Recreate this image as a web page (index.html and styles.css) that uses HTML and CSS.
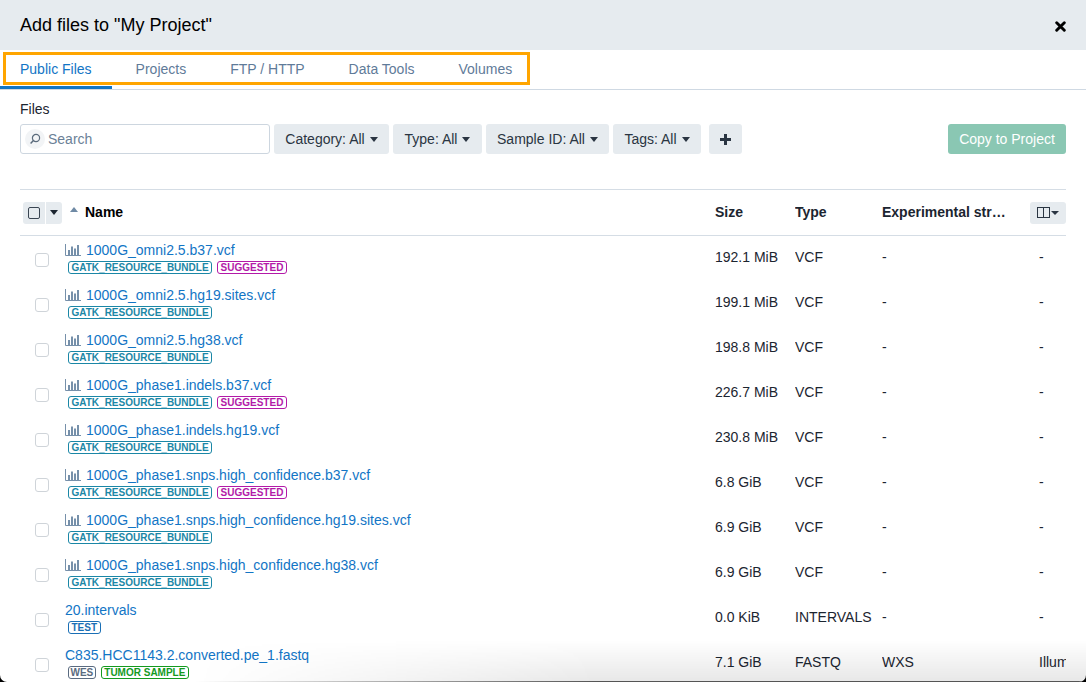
FILE: index.html
```html
<!DOCTYPE html>
<html lang="en">
<head>
<meta charset="utf-8">
<title>Add files</title>
<link rel="stylesheet" href="styles.css">
</head>
<body>
<svg class="sprite" width="0" height="0" aria-hidden="true">
  <symbol id="bars" viewBox="0 0 16 12"><path d="M.5 0v11.5H16" fill="none" stroke="currentColor"/><path d="M3 6h2v5H3zM6 2.5h2V11H6zM9 4.5h2V11H9zM12 1h2v10h-2z" fill="currentColor"/></symbol>
</svg>
<main class="modal">
  <header class="modal-head">
    <h1 class="title">Add files to "My Project"</h1>
    <svg class="close" width="11" height="11" viewBox="0 0 11 11" aria-label="Close"><path d="M1.7 1.7l7.6 7.6M9.3 1.7l-7.6 7.6" stroke="#000" stroke-width="2.9" stroke-linecap="round"/></svg>
  </header>
  <nav class="tabs">
    <div class="tab-highlight"></div>
    <a class="tab tab-active">Public Files</a>
    <a class="tab">Projects</a>
    <a class="tab">FTP / HTTP</a>
    <a class="tab">Data Tools</a>
    <a class="tab">Volumes</a>
  </nav>
  <section class="content">
    <div class="files-label">Files</div>
    <div class="toolbar">
      <label class="search">
        <span class="search-icon"><svg width="12" height="12" viewBox="0 0 12 12"><circle cx="7" cy="5" r="3.6" fill="none" stroke="#5b6b7c" stroke-width="1.2"/><path d="M4.4 7.6L1.6 10.6" stroke="#5b6b7c" stroke-width="1.5"/></svg></span>
        <span class="search-text">Search</span>
      </label>
      <button class="btn btn-category">Category: All<i class="caret"></i></button>
      <button class="btn btn-type">Type: All<i class="caret"></i></button>
      <button class="btn btn-sample">Sample ID: All<i class="caret"></i></button>
      <button class="btn btn-tags">Tags: All<i class="caret"></i></button>
      <button class="btn btn-plus"><svg width="13" height="13" viewBox="0 0 13 13"><path d="M6.5 1v11M1 6.5h11" stroke="#2a3542" stroke-width="3"/></svg></button>
      <button class="btn btn-copy">Copy to Project</button>
    </div>
    <div class="table">
      <div class="row head-row">
        <div class="head-check">
          <span class="check-group"><span class="check-main"><i class="box-dark"></i></span><span class="check-drop"><i class="caret caret-dark"></i></span></span>
        </div>
        <div class="cell name-head"><i class="sort-up"></i>Name</div>
        <div class="cell">Size</div>
        <div class="cell">Type</div>
        <div class="cell">Experimental str…</div>
        <div class="cell col-toggle-wrap"><span class="col-toggle"><svg width="13" height="11" viewBox="0 0 13 11"><rect x=".5" y=".5" width="12" height="10" fill="none" stroke="#2a3542"/><path d="M6.5 .5v10" stroke="#2a3542"/></svg><i class="caret caret-small"></i></span></div>
      </div>

      <div class="row"><div class="check"><i class="box"></i></div><div class="name"><a class="link"><svg class="bars"><use href="#bars"/></svg>1000G_omni2.5.b37.vcf</a><div class="tags"><span class="tag t-gatk">GATK_RESOURCE_BUNDLE</span><span class="tag t-sug">SUGGESTED</span></div></div><div class="cell">192.1 MiB</div><div class="cell">VCF</div><div class="cell">-</div><div class="cell">-</div></div>
      <div class="row"><div class="check"><i class="box"></i></div><div class="name"><a class="link"><svg class="bars"><use href="#bars"/></svg>1000G_omni2.5.hg19.sites.vcf</a><div class="tags"><span class="tag t-gatk">GATK_RESOURCE_BUNDLE</span></div></div><div class="cell">199.1 MiB</div><div class="cell">VCF</div><div class="cell">-</div><div class="cell">-</div></div>
      <div class="row"><div class="check"><i class="box"></i></div><div class="name"><a class="link"><svg class="bars"><use href="#bars"/></svg>1000G_omni2.5.hg38.vcf</a><div class="tags"><span class="tag t-gatk">GATK_RESOURCE_BUNDLE</span></div></div><div class="cell">198.8 MiB</div><div class="cell">VCF</div><div class="cell">-</div><div class="cell">-</div></div>
      <div class="row"><div class="check"><i class="box"></i></div><div class="name"><a class="link"><svg class="bars"><use href="#bars"/></svg>1000G_phase1.indels.b37.vcf</a><div class="tags"><span class="tag t-gatk">GATK_RESOURCE_BUNDLE</span><span class="tag t-sug">SUGGESTED</span></div></div><div class="cell">226.7 MiB</div><div class="cell">VCF</div><div class="cell">-</div><div class="cell">-</div></div>
      <div class="row"><div class="check"><i class="box"></i></div><div class="name"><a class="link"><svg class="bars"><use href="#bars"/></svg>1000G_phase1.indels.hg19.vcf</a><div class="tags"><span class="tag t-gatk">GATK_RESOURCE_BUNDLE</span></div></div><div class="cell">230.8 MiB</div><div class="cell">VCF</div><div class="cell">-</div><div class="cell">-</div></div>
      <div class="row"><div class="check"><i class="box"></i></div><div class="name"><a class="link"><svg class="bars"><use href="#bars"/></svg>1000G_phase1.snps.high_confidence.b37.vcf</a><div class="tags"><span class="tag t-gatk">GATK_RESOURCE_BUNDLE</span><span class="tag t-sug">SUGGESTED</span></div></div><div class="cell">6.8 GiB</div><div class="cell">VCF</div><div class="cell">-</div><div class="cell">-</div></div>
      <div class="row"><div class="check"><i class="box"></i></div><div class="name"><a class="link"><svg class="bars"><use href="#bars"/></svg>1000G_phase1.snps.high_confidence.hg19.sites.vcf</a><div class="tags"><span class="tag t-gatk">GATK_RESOURCE_BUNDLE</span></div></div><div class="cell">6.9 GiB</div><div class="cell">VCF</div><div class="cell">-</div><div class="cell">-</div></div>
      <div class="row"><div class="check"><i class="box"></i></div><div class="name"><a class="link"><svg class="bars"><use href="#bars"/></svg>1000G_phase1.snps.high_confidence.hg38.vcf</a><div class="tags"><span class="tag t-gatk">GATK_RESOURCE_BUNDLE</span></div></div><div class="cell">6.9 GiB</div><div class="cell">VCF</div><div class="cell">-</div><div class="cell">-</div></div>
      <div class="row"><div class="check"><i class="box"></i></div><div class="name"><a class="link">20.intervals</a><div class="tags"><span class="tag t-test">TEST</span></div></div><div class="cell">0.0 KiB</div><div class="cell">INTERVALS</div><div class="cell">-</div><div class="cell">-</div></div>
      <div class="row"><div class="check"><i class="box"></i></div><div class="name"><a class="link">C835.HCC1143.2.converted.pe_1.fastq</a><div class="tags"><span class="tag t-wes">WES</span><span class="tag t-tumor">TUMOR SAMPLE</span></div></div><div class="cell">7.1 GiB</div><div class="cell">FASTQ</div><div class="cell">WXS</div><div class="cell">Illumina</div></div>
    </div>
  </section>
  <div class="bottom-fade"></div>
</main>
</body>
</html>
```
FILE: styles.css
```css
* { box-sizing: border-box; }
html, body { margin: 0; height: 100%; background: #000; overflow: hidden; }
body { font-family: "Liberation Sans", Arial, sans-serif; font-size: 14px; color: #1c2530; }
.sprite { position: absolute; }
.modal { position: relative; width: 1086px; height: 682px; background: #fff; overflow: hidden; border-radius: 0 0 7px 7px; }
.modal-head { height: 50px; background: #e6ebef; display: flex; align-items: center; justify-content: space-between; padding: 0 20px; }
.title { margin: 0; font-size: 18px; font-weight: 400; color: #000; }
.close { position: relative; top: 1px; }
.tabs { position: relative; height: 40px; display: flex; border-bottom: 1px solid #cfd9e3; }
.tab { height: 36px; display: flex; align-items: center; padding: 2px 22px 0; color: #5f7b99; font-size: 14px; white-space: nowrap; }
.tab-active { color: #1275c5; box-shadow: 0 3px 0 #1275c5; padding-left: 20px; padding-right: 20px; margin-right: 2px; }
.tab-highlight { position: absolute; left: 3px; top: 2px; width: 527px; height: 33px; border: 3px solid #ffa500; pointer-events: none; }
.content { padding: 11px 20px 0; }
.files-label { font-size: 14px; line-height: 16px; color: #1c2530; }
.toolbar { display: flex; align-items: stretch; height: 30px; margin-top: 7px; gap: 4px; }
.search { width: 250px; display: flex; align-items: center; border: 1px solid #cdd6df; border-radius: 3px; padding-left: 4px; }
.search-icon { width: 20px; height: 20px; border-radius: 50%; background: #f2f4f6; display: flex; align-items: center; justify-content: center; }
.search-text { margin-left: 3px; color: #6b8197; }
.btn { border: 0; border-radius: 3px; background: #e6ebef; color: #2a3542; font: 14px "Liberation Sans", Arial, sans-serif; padding: 0; display: flex; align-items: center; justify-content: center; }
.btn-category { width: 115px; }
.btn-type { width: 89px; }
.btn-sample { width: 123px; }
.btn-tags { width: 88px; }
.btn-plus { width: 33px; margin-left: 4px; }
.btn-copy { width: 118px; margin-left: auto; background: #8ac7b3; color: #fff; }
.caret { display: inline-block; width: 0; height: 0; margin-left: 5px; border-left: 4.5px solid transparent; border-right: 4.5px solid transparent; border-top: 5px solid #2a3542; }
.caret-dark { margin: 0; border-top-color: #1c2530; }
.caret-small { margin-left: 1px; border-left-width: 4px; border-right-width: 4px; border-top-width: 4px; }
.table { margin-top: 35px; }
.row { display: grid; grid-template-columns: 45px 650px 80px 87px 157px 27px; height: 45px; align-items: center; }
.row > .cell { padding-bottom: 4px; }
.head-row { height: 47px; border-top: 1px solid #d5dde5; border-bottom: 1px solid #d5dde5; font-weight: 700; color: #1c2530; }
.head-row > .cell { padding-bottom: 2px; }
.cell { white-space: nowrap; overflow: hidden; }
.head-check { padding-left: 3px; }
.check-group { display: inline-flex; width: 39px; height: 22px; gap: 1px; vertical-align: top; }
.check-main { width: 22px; background: #e6ebef; border-radius: 3px 0 0 3px; display: flex; align-items: center; justify-content: center; }
.check-drop { width: 16px; background: #e6ebef; border-radius: 0 3px 3px 0; display: flex; align-items: center; justify-content: center; }
.box-dark { width: 12px; height: 12px; border: 1.2px solid #3a4552; border-radius: 2px; }
.check { align-self: start; padding-top: 17px; }
.box { display: block; width: 14px; height: 14px; margin-left: 15px; border: 1px solid #cfd4d9; border-radius: 3px; }
.name-head { display: flex; align-items: center; overflow: visible; color: #000; padding-left: 1px; }
.sort-up { width: 0; height: 0; margin: -5px 7px 0 4px; border-left: 4.5px solid transparent; border-right: 4.5px solid transparent; border-bottom: 5px solid #6f8aa5; }
.head-row > .col-toggle-wrap { overflow: visible; padding-bottom: 0; }
.col-toggle { display: flex; align-items: center; justify-content: center; width: 36px; height: 22px; margin-left: -9px; background: #e6ebef; border-radius: 3px; }
.name { display: flex; flex-direction: column; align-items: flex-start; align-self: start; padding-top: 6px; }
.link { color: #1275c5; line-height: 16px; display: flex; align-items: center; }
.bars { width: 16px; height: 12px; margin-right: 5px; color: #7690aa; }
.tags { display: flex; gap: 5px; margin-top: 3px; margin-left: 3px; }
.tag { height: 13px; line-height: 11px; padding: 0 2.5px; border: 1px solid; border-radius: 3px; font-size: 10px; font-weight: 700; white-space: nowrap; }
.t-gatk { color: #1b87a6; border-color: #1b87a6; }
.t-sug { color: #b31aa8; border-color: #b31aa8; }
.t-test { color: #1a6fb5; border-color: #1a6fb5; }
.t-wes { color: #5a6b80; border-color: #5a6b80; padding: 0 1.5px; }
.t-tumor { color: #149a1f; border-color: #149a1f; }
.bottom-fade { position: absolute; left: 0; right: 0; bottom: 0; height: 42px; background: linear-gradient(to bottom, rgba(0,0,0,0), rgba(0,0,0,.09)); border-bottom: 1px solid #555; -webkit-mask-image: linear-gradient(to right, transparent 18%, #000 55%); mask-image: linear-gradient(to right, transparent 18%, #000 55%); pointer-events: none; }
```
